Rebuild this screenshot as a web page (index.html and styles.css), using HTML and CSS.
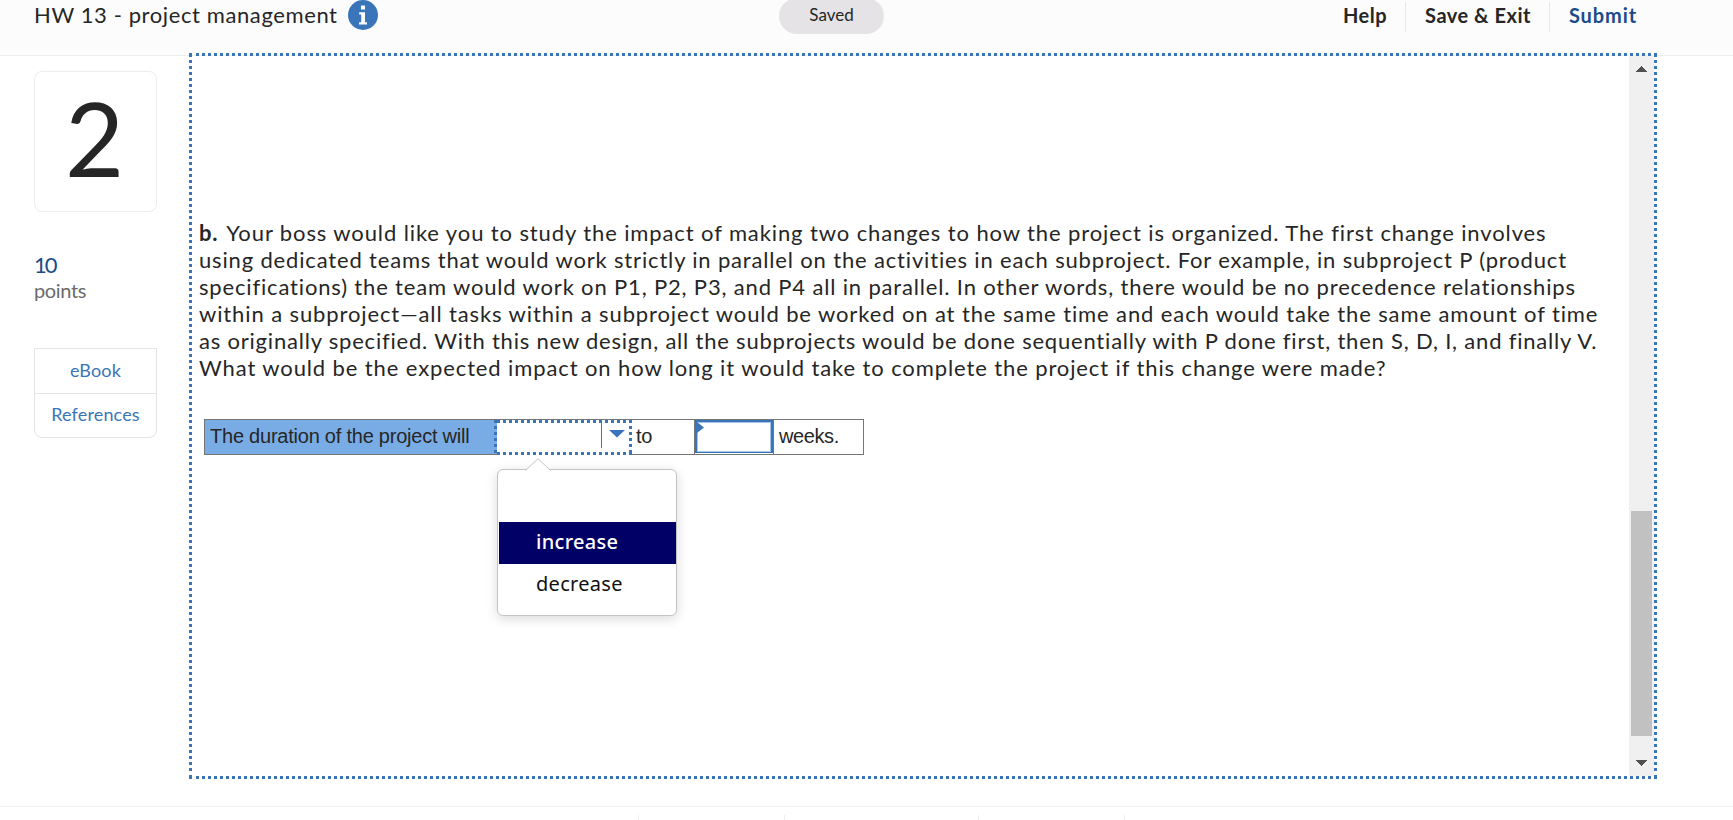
FILE: index.html
```
<!DOCTYPE html>
<html lang="en">
<head>
    <meta charset="UTF-8">
    <meta name="viewport" content="width=device-width, initial-scale=1.0">
    <title>HW 13 - project management</title>
    <link rel="stylesheet" href="styles.css">
</head>
<body>
    <header class="header">
        <div class="title">
            <span class="title-text">HW 13 - project management</span>
            <svg class="info" width="30" height="30" viewBox="0 0 30 30">
                <circle cx="15" cy="15" r="15" fill="#3a75ba"/>
                <path d="M13 5.5h4v4h-4zM11.2 12.2h5.8v10h2v2.3h-8v-2.3h2.2v-7.7h-2z" fill="#fff"/>
            </svg>
        </div>
        <div class="saved">Saved</div>
        <nav class="actions">
            <a class="action help">Help</a>
            <a class="action save">Save &amp; Exit</a>
            <a class="action submit">Submit</a>
        </nav>
    </header>

    <main class="main">
        <aside class="sidebar">
            <div class="number">2</div>
            <div class="score">10</div>
            <div class="points">points</div>
            <div class="links">
                <a class="link">eBook</a>
                <a class="link">References</a>
            </div>
        </aside>

        <section class="frame">
            <div class="question">
                <p class="text">
                    <span class="line l1"><b>b.</b> Your boss would like you to study the impact of making two changes to how the project is organized. The first change involves</span>
                    <span class="line l2">using dedicated teams that would work strictly in parallel on the activities in each subproject. For example, in subproject P (product</span>
                    <span class="line l2">specifications) the team would work on P1, P2, P3, and P4 all in parallel. In other words, there would be no precedence relationships</span>
                    <span class="line l1">within a subproject—all tasks within a subproject would be worked on at the same time and each would take the same amount of time</span>
                    <span class="line l3">as originally specified. With this new design, all the subprojects would be done sequentially with P done first, then S, D, I, and finally V.</span>
                    <span class="line l1">What would be the expected impact on how long it would take to complete the project if this change were made?</span>
                </p>

                <div class="answer">
                    <div class="cell label">The duration of the project will</div>
                    <div class="select">
                        <div class="select-value"></div>
                        <svg class="select-arrow" width="16" height="8" viewBox="0 0 16 8"><path d="M0 0h16L8 7.5z" fill="#3a75ba"/></svg>
                        <!-- dropdown menu -->
                        <div class="menu">
                            <svg class="pointer" width="26" height="13" viewBox="0 0 26 13"><path d="M0.5 12.5L13 .7l12.5 11.8" fill="#fff" stroke="#c4c4c4"/></svg>
                            <div class="option"></div>
                            <div class="option active">increase</div>
                            <div class="option">decrease</div>
                        </div>
                    </div>
                    <div class="cell to">to</div>
                    <div class="input">
                        <svg class="flag" width="7" height="11" viewBox="0 0 7 11"><path d="M0 0l7 5.5L0 11z" fill="#3a75ba"/></svg>
                    </div>
                    <div class="cell weeks">weeks.</div>
                </div>
            </div>

            <div class="scrollbar">
                <svg width="11" height="6" viewBox="0 0 11 6" shape-rendering="crispEdges"><path d="M5.5 0L11 6H0z" fill="#505050"/></svg>
                <div class="thumb"></div>
                <svg width="11" height="6" viewBox="0 0 11 6" shape-rendering="crispEdges"><path d="M5.5 6L11 0H0z" fill="#505050"/></svg>
            </div>
        </section>
    </main>

    <footer class="footer">
        <div class="tick"></div>
        <div class="tick"></div>
        <div class="tick"></div>
        <div class="tick"></div>
    </footer>
</body>
</html>
```
FILE: styles.css
```
* {
    box-sizing: border-box;
}
body {
    margin: 0;
    height: 820px;
    overflow: hidden;
    display: flex;
    flex-direction: column;
    font-family: Lato, sans-serif;
    color: #262626;
    background-color: #fff;
}

/* header */
.header {
    display: grid;
    grid-template-columns: 779px 105px 1fr;
    height: 56px;
    flex: none;
    background-color: #fcfcfc;
    border-bottom: 1px solid #eee;
}
.title {
    display: flex;
    padding-left: 34px;
}
.title-text {
    width: 314px;
    font-size: 22px;
    line-height: 30px;
    letter-spacing: 0.6px;
    white-space: nowrap;
}
.info {
    flex: none;
}
.saved {
    height: 36px;
    margin-top: -2px;
    border-radius: 18px;
    background-color: #e5e3e6;
    font-size: 17px;
    line-height: 33px;
    text-align: center;
}
.actions {
    display: flex;
    justify-content: flex-end;
    height: 30px;
    margin: 2px 78px 0 0;
}
.action {
    padding: 0 18px 0 19px;
    font-size: 20px;
    font-weight: bold;
    line-height: 26px;
    letter-spacing: 0.5px;
    white-space: nowrap;
}
.action + .action {
    border-left: 1px solid #e8e8e8;
}
.submit {
    color: #1b4b8a;
    letter-spacing: 0.9px;
}

/* left column */
.main {
    display: flex;
    height: 750px;
    flex: none;
}
.sidebar {
    width: 189px;
    padding: 15px 32px 0 34px;
}
.number {
    height: 141px;
    padding-right: 2px;
    border: 1px solid #ededed;
    border-radius: 8px;
    font-size: 102px;
    line-height: 132px;
    text-align: center;
}
.score {
    margin-top: 40px;
    font-size: 22px;
    line-height: 26px;
    letter-spacing: -2px;
    color: #1b4b8a;
}
.points {
    font-size: 20px;
    line-height: 24px;
    letter-spacing: -0.35px;
    color: #6b6b6b;
}
.links {
    margin-top: 46px;
    border: 1px solid #e4e4e4;
    border-radius: 0 0 8px 8px;
}
.link {
    display: block;
    height: 44px;
    font-size: 18px;
    line-height: 42px;
    letter-spacing: 0.15px;
    text-align: center;
    color: #3a75ba;
}
.link + .link {
    line-height: 40px;
    border-top: 1px solid #e4e4e4;
}

/* dotted frame, square dots on all four sides and solid corners */
.frame {
    --dots: #3a75ba 0 3px, transparent 3px 6px;
    --corner: linear-gradient(#3a75ba, #3a75ba);
    position: relative;
    width: 1468px;
    height: 726px;
    margin-top: -3px;
    padding: 3px;
    display: flex;
    background:
        var(--corner) 0 0 / 3px 4px no-repeat,
        var(--corner) 100% 0 / 3px 4px no-repeat,
        var(--corner) 0 100% / 3px 4px no-repeat,
        var(--corner) 100% 100% / 3px 4px no-repeat,
        repeating-linear-gradient(to right, var(--dots)) 7px 0 / 1458px 3px no-repeat,
        repeating-linear-gradient(to right, var(--dots)) 7px 100% / 1458px 3px no-repeat,
        repeating-linear-gradient(to bottom, var(--dots)) 0 7px / 3px 714px no-repeat,
        repeating-linear-gradient(to bottom, var(--dots)) 100% 7px / 3px 714px no-repeat,
        linear-gradient(#fff, #fff) 0 3px / 100% 723px no-repeat;
}
.question {
    flex: 1;
    padding: 163px 0 0 7px;
}
.text {
    margin: 0;
    font-size: 22px;
    line-height: 27px;
}
.text b {
    margin-right: 2px;
}
.line {
    display: block;
    white-space: nowrap;
}
.l1 {
    letter-spacing: 0.89px;
}
.l2 {
    letter-spacing: 0.835px;
}
.l3 {
    letter-spacing: 0.795px;
}

/* answer row */
.answer {
    display: flex;
    width: 660px;
    height: 36px;
    margin: 38px 0 0 5px;
    border: 1px solid #757575;
    font-family: "Liberation Sans", Arial, sans-serif;
    font-size: 20px;
    line-height: 32px;
    letter-spacing: -0.23px;
}
.cell {
    white-space: nowrap;
}
.label {
    width: 292px;
    padding-left: 5px;
    background-color: #79ace5;
}
.select {
    --dots: #3a75ba 0 3px, transparent 3px 6px;
    position: relative;
    display: flex;
    width: 138px;
    height: 35px;
    margin-left: -3px;
    background:
        repeating-linear-gradient(to right, var(--dots)) 3px 0 / 135px 3px no-repeat,
        repeating-linear-gradient(to right, var(--dots)) 3px 100% / 135px 3px no-repeat,
        repeating-linear-gradient(to bottom, var(--dots)) 0 0 / 3px 100% no-repeat,
        repeating-linear-gradient(to bottom, var(--dots)) 100% 0 / 3px 100% no-repeat,
        linear-gradient(#fff, #fff) 3px 0 / 135px 35px no-repeat;
}
.select-value {
    width: 108px;
    height: 28px;
    border-right: 1px solid #3a75ba;
}
.select-arrow {
    margin: 10px 0 0 7px;
}
.to {
    width: 63px;
    padding-left: 4px;
    border-right: 1px solid #757575;
}
.input {
    width: 78px;
    height: 33px;
    border: 2px solid #3a75ba;
    border-bottom-width: 1px;
    box-shadow: inset 0 0 0 1px #a5c4e6;
}
.flag {
    display: block;
}
.weeks {
    flex: 1;
    padding-left: 5px;
    border-left: 1px solid #757575;
    letter-spacing: -0.4px;
}

/* menu over the page */
.menu {
    position: absolute;
    top: 49px;
    left: 3px;
    width: 180px;
    height: 147px;
    padding: 10px 0 0 1px;
    border: 1px solid #c4c4c4;
    border-radius: 6px;
    background-color: #fff;
    box-shadow: 0 3px 12px rgba(0, 0, 0, 0.15);
    font-family: "Noto Sans", sans-serif;
    color: #111;
}
.pointer {
    position: absolute;
    top: -12px;
    left: 27px;
}
.option {
    height: 42px;
    padding-left: 37px;
    line-height: 40px;
    letter-spacing: 0.3px;
}
.active {
    background-color: #000066;
    color: #fff;
    font-weight: 500;
}

/* scrollbar */
.scrollbar {
    display: flex;
    flex-direction: column;
    align-items: center;
    width: 25px;
    padding: 10px 0;
    background-color: #f0f0f0;
}
.thumb {
    width: 21px;
    height: 225px;
    margin: 439px 0 24px;
    background-color: #c1c1c1;
}

/* footer */
.footer {
    flex: 1;
    display: grid;
    grid-template-columns: 146px 194px 146px 1px;
    padding: 8px 0 0 638px;
    border-top: 1px solid #f0f0f0;
}
.tick {
    border-left: 1px solid #eee;
}
```
